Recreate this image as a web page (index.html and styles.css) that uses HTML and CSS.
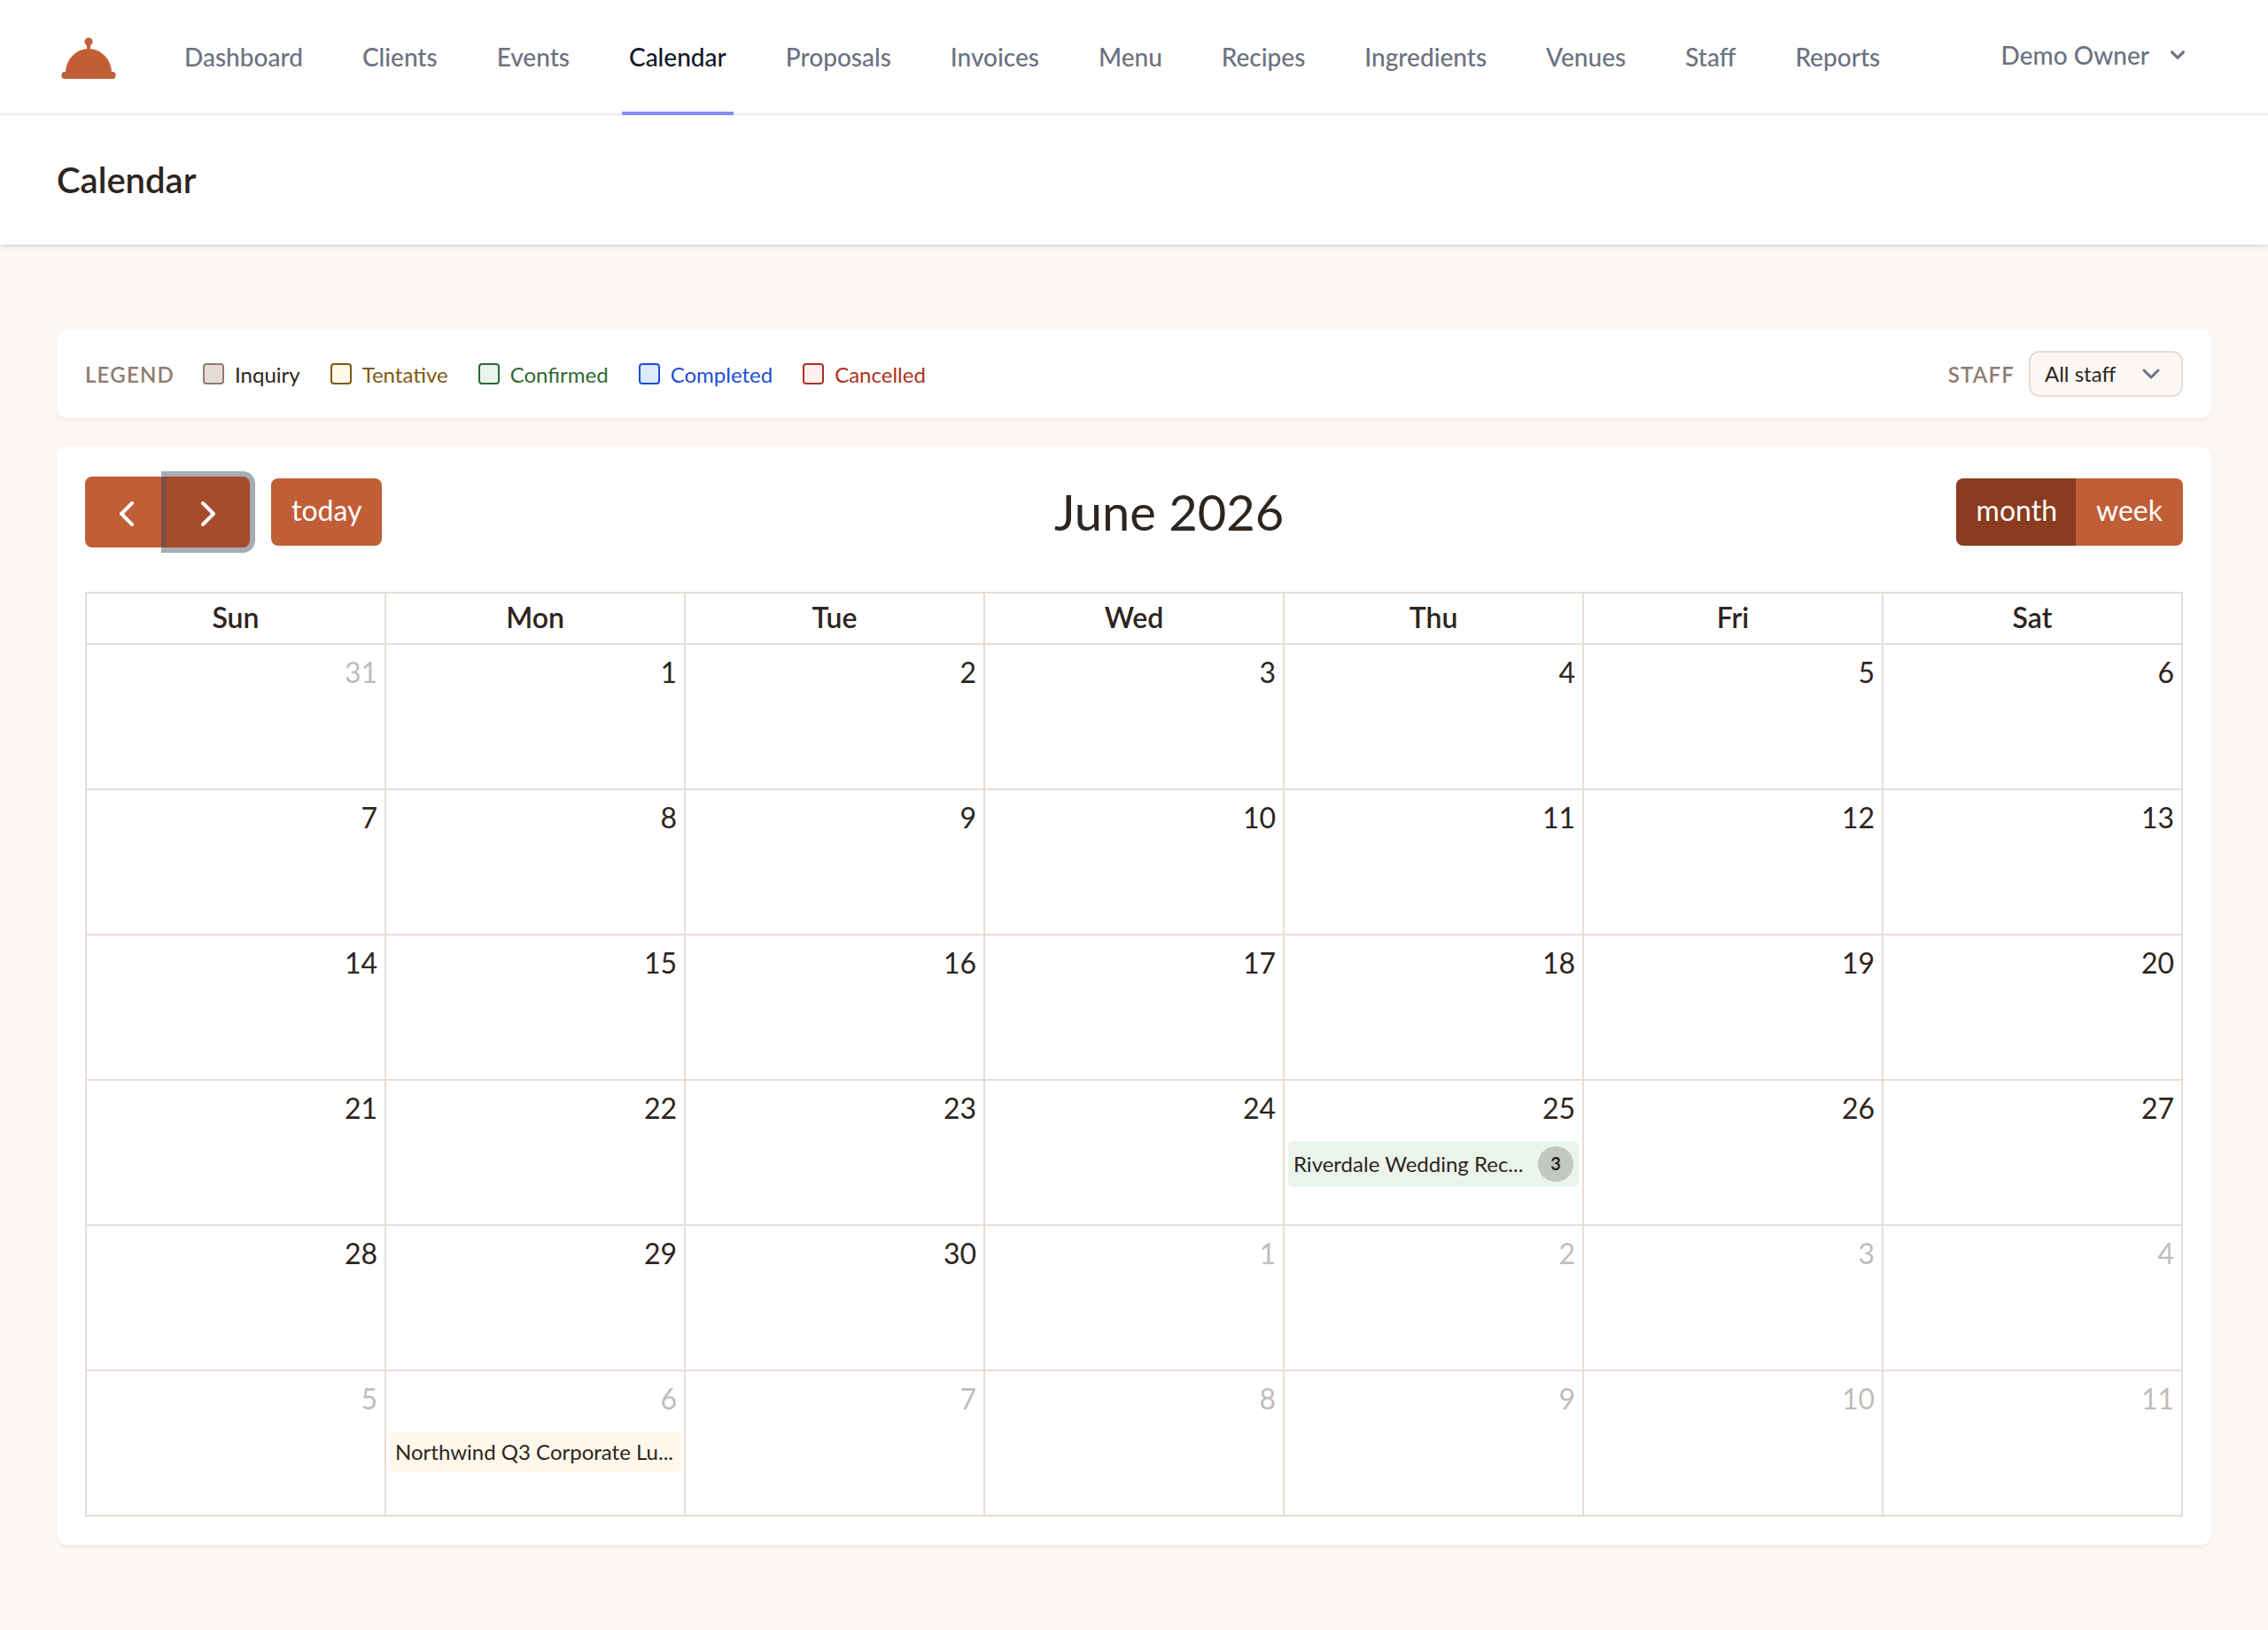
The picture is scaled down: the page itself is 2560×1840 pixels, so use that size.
FILE: index.html
```html
<!DOCTYPE html>
<html lang="en">
<head>
    <meta charset="UTF-8">
    <meta name="viewport" content="width=device-width, initial-scale=1.0">
    <title>Calendar</title>
    <link rel="stylesheet" href="styles.css">
</head>
<body>

    <nav class="navbar">
        <a href="#" class="logo" aria-label="Home">
            <svg width="72" height="72" viewBox="0 0 72 72" fill="currentColor">
                <circle cx="36" cy="19" r="4.6"/>
                <rect x="34" y="20" width="4" height="9"/>
                <path d="M10 54a26 27 0 0 1 52 0z"/>
                <rect x="5.5" y="53" width="61" height="8" rx="3.5"/>
            </svg>
        </a>
        <div class="nav-links">
            <a href="#" class="nav-link">Dashboard</a>
            <a href="#" class="nav-link">Clients</a>
            <a href="#" class="nav-link">Events</a>
            <a href="#" class="nav-link active">Calendar</a>
            <a href="#" class="nav-link">Proposals</a>
            <a href="#" class="nav-link">Invoices</a>
            <a href="#" class="nav-link">Menu</a>
            <a href="#" class="nav-link">Recipes</a>
            <a href="#" class="nav-link">Ingredients</a>
            <a href="#" class="nav-link">Venues</a>
            <a href="#" class="nav-link">Staff</a>
            <a href="#" class="nav-link">Reports</a>
        </div>
        <button type="button" class="user-btn">
            <span>Demo Owner</span>
            <svg width="32" height="32" viewBox="0 0 20 20" fill="currentColor">
                <path fill-rule="evenodd" clip-rule="evenodd" d="M5.293 7.293a1 1 0 011.414 0L10 10.586l3.293-3.293a1 1 0 111.414 1.414l-4 4a1 1 0 01-1.414 0l-4-4a1 1 0 010-1.414z"/>
            </svg>
        </button>
    </nav>

    <header class="page-header">
        <h1>Calendar</h1>
    </header>

    <main class="content">
        <section class="card legend">
            <span class="label">Legend</span>
            <ul class="legend-list">
                <li class="inquiry"><span class="swatch"></span>Inquiry</li>
                <li class="tentative"><span class="swatch"></span>Tentative</li>
                <li class="confirmed"><span class="swatch"></span>Confirmed</li>
                <li class="completed"><span class="swatch"></span>Completed</li>
                <li class="cancelled"><span class="swatch"></span>Cancelled</li>
            </ul>
            <label class="label" for="staff-filter">Staff</label>
            <select id="staff-filter" class="staff-select">
                <option>All staff</option>
            </select>
        </section>

        <section class="card calendar">
            <div class="toolbar">
                <div class="toolbar-group">
                    <div class="btn-group">
                        <button type="button" class="btn btn-icon" aria-label="Previous month">
                            <svg width="32" height="32" viewBox="0 0 32 32"><path d="M22 6L10 18l12 12"/></svg>
                        </button>
                        <button type="button" class="btn btn-icon focused" aria-label="Next month">
                            <svg width="32" height="32" viewBox="0 0 32 32"><path d="M10 6l12 12-12 12"/></svg>
                        </button>
                    </div>
                    <button type="button" class="btn">today</button>
                </div>
                <h2>June 2026</h2>
                <div class="btn-group">
                    <button type="button" class="btn selected">month</button>
                    <button type="button" class="btn">week</button>
                </div>
            </div>

            <table class="month">
                <thead>
                    <tr>
                        <th>Sun</th>
                        <th>Mon</th>
                        <th>Tue</th>
                        <th>Wed</th>
                        <th>Thu</th>
                        <th>Fri</th>
                        <th>Sat</th>
                    </tr>
                </thead>
                <tbody>
                    <tr>
                        <td class="other"><a href="#" class="day">31</a></td>
                        <td><a href="#" class="day">1</a></td>
                        <td><a href="#" class="day">2</a></td>
                        <td><a href="#" class="day">3</a></td>
                        <td><a href="#" class="day">4</a></td>
                        <td><a href="#" class="day">5</a></td>
                        <td><a href="#" class="day">6</a></td>
                    </tr>
                    <tr>
                        <td><a href="#" class="day">7</a></td>
                        <td><a href="#" class="day">8</a></td>
                        <td><a href="#" class="day">9</a></td>
                        <td><a href="#" class="day">10</a></td>
                        <td><a href="#" class="day">11</a></td>
                        <td><a href="#" class="day">12</a></td>
                        <td><a href="#" class="day">13</a></td>
                    </tr>
                    <tr>
                        <td><a href="#" class="day">14</a></td>
                        <td><a href="#" class="day">15</a></td>
                        <td><a href="#" class="day">16</a></td>
                        <td><a href="#" class="day">17</a></td>
                        <td><a href="#" class="day">18</a></td>
                        <td><a href="#" class="day">19</a></td>
                        <td><a href="#" class="day">20</a></td>
                    </tr>
                    <tr>
                        <td><a href="#" class="day">21</a></td>
                        <td><a href="#" class="day">22</a></td>
                        <td><a href="#" class="day">23</a></td>
                        <td><a href="#" class="day">24</a></td>
                        <td>
                            <a href="#" class="day">25</a>
                            <a href="#" class="event event-confirmed">
                                <span class="event-title">Riverdale Wedding Rec...</span>
                                <span class="event-count">3</span>
                            </a>
                        </td>
                        <td><a href="#" class="day">26</a></td>
                        <td><a href="#" class="day">27</a></td>
                    </tr>
                    <tr>
                        <td><a href="#" class="day">28</a></td>
                        <td><a href="#" class="day">29</a></td>
                        <td><a href="#" class="day">30</a></td>
                        <td class="other"><a href="#" class="day">1</a></td>
                        <td class="other"><a href="#" class="day">2</a></td>
                        <td class="other"><a href="#" class="day">3</a></td>
                        <td class="other"><a href="#" class="day">4</a></td>
                    </tr>
                    <tr>
                        <td class="other"><a href="#" class="day">5</a></td>
                        <td class="other">
                            <a href="#" class="day">6</a>
                            <a href="#" class="event event-tentative">
                                <span class="event-title">Northwind Q3 Corporate Lu...</span>
                            </a>
                        </td>
                        <td class="other"><a href="#" class="day">7</a></td>
                        <td class="other"><a href="#" class="day">8</a></td>
                        <td class="other"><a href="#" class="day">9</a></td>
                        <td class="other"><a href="#" class="day">10</a></td>
                        <td class="other"><a href="#" class="day">11</a></td>
                    </tr>
                </tbody>
            </table>
        </section>
    </main>

</body>
</html>
```
FILE: styles.css
```css
* {
    box-sizing: border-box;
}

body {
    margin: 0;
    background: #fbf7f4;
    color: #2d2520;
    font-family: Lato, "Liberation Sans", sans-serif;
    font-size: 28px;
}

a {
    color: inherit;
    text-decoration: none;
}

button,
select {
    font-family: inherit;
    cursor: pointer;
}

h1,
h2 {
    margin: 0;
}

/* Navigation */
.navbar {
    display: flex;
    align-items: center;
    height: 130px;
    padding: 0 64px;
    background: #fff;
    border-bottom: 2px solid #f0f0f0;
}

.logo {
    display: flex;
    color: #c05e38;
    margin-right: 64px;
}

.nav-links {
    display: flex;
    gap: 51px;
    flex: 1;
    height: 130px;
    margin-bottom: -2px;
}

.nav-link {
    display: flex;
    align-items: center;
    padding: 2px 8px 0;
    color: #6b7280;
    font-weight: 500;
    border-bottom: 4px solid transparent;
}

.nav-link.active {
    color: #111827;
    border-bottom-color: #818cf8;
}

.user-btn {
    display: flex;
    align-items: center;
    gap: 16px;
    padding: 0 22px 4px;
    border: none;
    background: none;
    color: #6b7280;
    font-size: 28px;
    font-weight: 500;
}

.page-header {
    padding: 48px 64px;
    background: #fff;
    box-shadow: 0 2px 6px rgba(0, 0, 0, 0.1), 0 2px 4px -2px rgba(0, 0, 0, 0.1);
}

.page-header h1 {
    font-size: 40px;
    line-height: 50px;
    font-weight: 600;
}

.content {
    display: flex;
    flex-direction: column;
    gap: 32px;
    padding: 96px 64px;
}

.card {
    background: #fff;
    border-radius: 12px;
    box-shadow: 0 2px 4px rgba(0, 0, 0, 0.05);
}

/* Legend bar */
.legend {
    display: flex;
    align-items: center;
    padding: 24px 32px;
    font-size: 24px;
}

.label {
    color: #8f7c70;
    font-size: 24px;
    font-weight: 600;
    text-transform: uppercase;
    letter-spacing: 0.05em;
}

.legend-list {
    display: flex;
    flex: 1;
    gap: 34px;
    margin: 0;
    padding: 0 0 0 32px;
    list-style: none;
}

.legend-list li {
    display: flex;
    align-items: center;
    gap: 12px;
}

.swatch {
    width: 24px;
    height: 24px;
    border: 2px solid currentColor;
    border-radius: 4px;
}

.inquiry .swatch {
    background: #e7ddd8;
    border-color: #8f7c70;
}

.tentative {
    color: #80590f;
}

.tentative .swatch {
    background: #fff8eb;
}

.confirmed {
    color: #2d6a31;
}

.confirmed .swatch {
    background: #ebf4eb;
}

.completed {
    color: #1d4ed8;
}

.completed .swatch {
    background: #dbeafe;
}

.cancelled {
    color: #b03020;
}

.cancelled .swatch {
    background: #fff0f0;
}

.staff-select {
    appearance: none;
    height: 52px;
    margin-left: 16px;
    padding: 0 73px 2px 16px;
    border: 2px solid #e7ddd6;
    border-radius: 12px;
    background: #fbf7f4 url("data:image/svg+xml,%3Csvg xmlns='http://www.w3.org/2000/svg' viewBox='0 0 20 20' fill='none'%3E%3Cpath stroke='%236b7280' stroke-linecap='round' stroke-linejoin='round' stroke-width='1.5' d='M6 8l4 4 4-4'/%3E%3C/svg%3E") no-repeat right 14px center / 40px 40px;
    color: #2d2520;
    font-size: 24px;
}

/* Calendar */
.calendar {
    padding: 32px;
}

.toolbar {
    display: flex;
    justify-content: space-between;
    align-items: center;
    margin-bottom: 48px;
}

.toolbar h2 {
    font-size: 56px;
    line-height: 84px;
    font-weight: 400;
}

.toolbar-group {
    display: flex;
    align-items: center;
    gap: 24px;
}

.btn-group {
    display: flex;
}

.btn {
    padding: 12px 23px 16px;
    border: none;
    border-radius: 8px;
    background: #c05e38;
    color: #fff;
    font-size: 32px;
    line-height: 48px;
}

.btn-icon {
    display: flex;
    align-items: center;
    justify-content: center;
    width: 94px;
    height: 80px;
    padding: 0;
}

.btn-icon svg {
    fill: none;
    stroke: #fff;
    stroke-width: 4;
    stroke-linecap: round;
    stroke-linejoin: round;
}

.btn-group .btn:first-child {
    border-top-right-radius: 0;
    border-bottom-right-radius: 0;
}

.btn-group .btn:last-child {
    margin-left: -2px;
    border-top-left-radius: 0;
    border-bottom-left-radius: 0;
}

.btn.selected {
    background: #8a3b20;
}

.btn.focused {
    background: #a64b2c;
    box-shadow: 0 0 0 6px rgba(44, 62, 80, 0.43);
}

.month {
    width: 100%;
    table-layout: fixed;
    border-collapse: collapse;
}

.month th,
.month td {
    border: 2px solid #e7ddd6;
    padding: 0;
}

.month th {
    height: 58px;
    padding-bottom: 2px;
    font-size: 32px;
    font-weight: 600;
    line-height: 48px;
}

.month td {
    height: 164px;
    vertical-align: top;
}

.day {
    display: block;
    padding: 7px 8px 0;
    font-size: 32px;
    line-height: 48px;
    text-align: right;
}

.other .day {
    opacity: 0.3;
}

.event {
    display: flex;
    align-items: center;
    gap: 8px;
    margin: 13px 4px 0;
    padding: 6px;
    border-radius: 6px;
    font-size: 24px;
    line-height: 34px;
}

.event-confirmed {
    background: #ebf4eb;
}

.event-tentative {
    background: #fff8eb;
}

.event-title {
    flex: 1;
    overflow: hidden;
    white-space: nowrap;
    text-overflow: ellipsis;
}

.event-count {
    width: 40px;
    height: 40px;
    border-radius: 50%;
    background: rgba(0, 0, 0, 0.18);
    font-size: 20px;
    font-weight: 700;
    line-height: 38px;
    text-align: center;
}
```
